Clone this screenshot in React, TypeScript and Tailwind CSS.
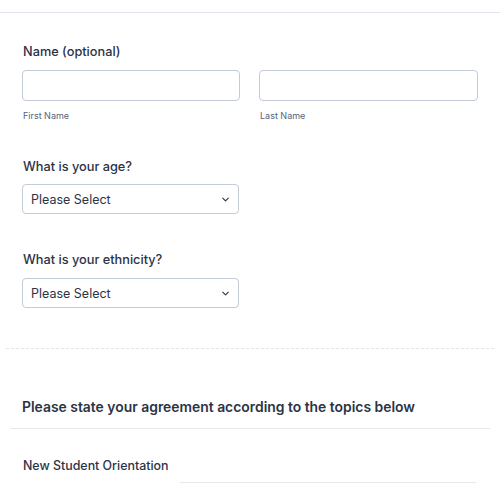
import { ChevronDown } from 'lucide-react';

function SelectBox() {
  return (
    <div className="w-[217px] h-[30px] border border-[#c3cad8] rounded-[4px] bg-white flex items-center justify-between pl-[8px] pr-[7px]">
      <span className="text-[12.5px] leading-[18px] text-[#2c3345] mt-[1px]">Please Select</span>
      <ChevronDown size={11} strokeWidth={2.4} className="text-[#2c3345]" />
    </div>
  );
}

export default function App() {
  return (
    <div className="w-[500px] h-[484px] overflow-hidden bg-white font-['Inter','Noto_Sans',sans-serif] text-[#2c3345]">
      <div className="h-[13px] border-b border-[#e3e5ec]" />

      <div className="px-[22px] pt-[29px]">
        <p className="text-[12.75px] leading-[20px] font-medium pl-[1px]">Name (optional)</p>
        <div className="grid grid-cols-[218px_219px] gap-x-[19px] mt-[8px]">
          <div>
            <div className="h-[31px] border border-[#c3cad8] rounded-[4px]" />
            <p className="text-[9px] leading-[14px] text-[#57647e] mt-[8px] pl-[1px]">First Name</p>
          </div>
          <div>
            <div className="h-[31px] border border-[#c3cad8] rounded-[4px]" />
            <p className="text-[9px] leading-[14px] text-[#57647e] mt-[8px] pl-[1px]">Last Name</p>
          </div>
        </div>

        <p className="text-[12.75px] leading-[20px] font-medium pl-[1px] mt-[34px]">What is your age?</p>
        <div className="mt-[7px]">
          <SelectBox />
        </div>

        <p className="text-[12.75px] leading-[20px] font-medium pl-[1px] mt-[36px]">What is your ethnicity?</p>
        <div className="mt-[8px]">
          <SelectBox />
        </div>
      </div>

      <div className="mx-[6px] mt-[40px] border-t border-dashed border-[#e3e5ec]" />

      <p className="px-[22px] mt-[47px] text-[13.9px] leading-[22px] font-semibold">
        Please state your agreement according to the topics below
      </p>
      <div className="mx-[10px] mt-[10px] border-t border-[#e6e8ee]" />

      <p className="px-[23px] mt-[28px] text-[12.4px] leading-[18px] font-medium">New Student Orientation</p>
      <div className="ml-[180px] mr-[24px] mt-[7px] border-t border-[#e6e8ee]" />
    </div>
  );
}
